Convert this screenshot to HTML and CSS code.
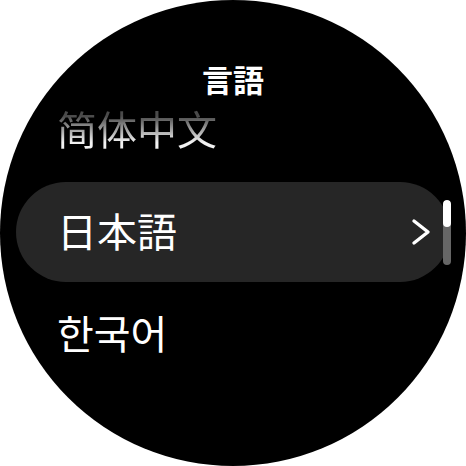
FILE: index.html
```html
<!DOCTYPE html>
<html lang="ja">
<head>
<meta charset="utf-8">
<link rel="stylesheet" href="styles.css">
</head>
<body>
<div class="watch">
  <div class="title">言語</div>
  <ul class="list">
    <li class="item faded"><span class="label" lang="zh-CN">简体中文</span></li>
    <li class="item selected">
      <span class="label">日本語</span>
      <svg class="chev" width="20" height="28" viewBox="0 0 20 28"><path d="M3 3 L17 14 L3 25" fill="none" stroke="#fff" stroke-width="3.4" stroke-linecap="round" stroke-linejoin="round"/></svg>
    </li>
    <li class="item"><span class="label" lang="ko">한국어</span></li>
  </ul>
  <div class="scrollbar"><div class="thumb"></div></div>
</div>
</body>
</html>
```
FILE: styles.css
```css
html, body {
  margin: 0;
  padding: 0;
  background: #fff;
}
.watch {
  position: relative;
  width: 466px;
  height: 466px;
  border-radius: 50%;
  background: #000;
  overflow: hidden;
  font-family: "Noto Sans CJK JP", "Noto Sans CJK KR", "Noto Sans CJK SC", sans-serif;
  color: #fff;
}
.title {
  position: absolute;
  top: 63px;
  left: 0;
  right: 0;
  text-align: center;
  font-size: 31px;
  line-height: 32px;
  font-weight: 700;
  z-index: 2;
}
.list {
  list-style: none;
  margin: 0;
  padding: 80px 16px 0 16px;
  display: flex;
  flex-direction: column;
  gap: 2px;
}
.item {
  height: 100px;
  border-radius: 50px;
  display: flex;
  align-items: center;
  justify-content: space-between;
  padding: 0 19px 4px 41px;
  box-sizing: border-box;
  font-size: 40px;
  line-height: 48px;
}
.item.selected {
  background: #262626;
}
.faded .label {
  background: linear-gradient(to bottom, #4a4a4a 25%, #f2f2f2 80%);
  -webkit-background-clip: text;
  background-clip: text;
  color: transparent;
}
.chev {
  display: block;
  margin-top: 4px;
}
.scrollbar {
  position: absolute;
  left: 443px;
  top: 200px;
  width: 8px;
  height: 65px;
  border-radius: 4px;
  background: #666;
  overflow: hidden;
}
.thumb {
  height: 27px;
  border-radius: 4px;
  background: #fff;
}
```
